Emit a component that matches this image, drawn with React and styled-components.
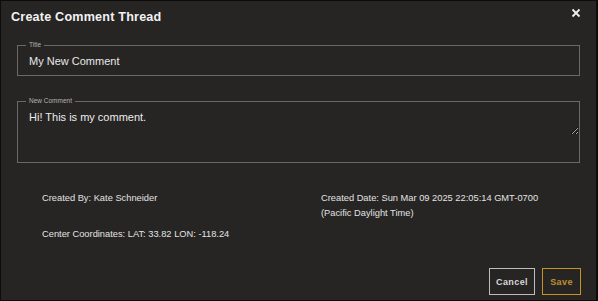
import React from 'react';
import styled, { createGlobalStyle } from 'styled-components';

const GlobalStyle = createGlobalStyle`
  html, body {
    margin: 0;
    padding: 0;
    background: #111;
  }
  * {
    box-sizing: border-box;
  }
`;

const Dialog = styled.div`
  width: 598px;
  height: 301px;
  background-color: #262523;
  border: 1px solid #0c0c0c;
  border-right-width: 2px;
  font-family: "Liberation Sans", Arial, sans-serif;
  color: #e6e6e6;
  display: flex;
  flex-direction: column;
`;

const Header = styled.header`
  display: flex;
  align-items: center;
  justify-content: space-between;
  padding: 2px 15px 0 10px;
  height: 29px;
`;

const Title = styled.h2`
  margin: 0;
  font-size: 12.6px;
  font-weight: 700;
  letter-spacing: 0.2px;
  color: #f2f2f2;
`;

const CloseButton = styled.button`
  background: none;
  border: none;
  padding: 0;
  margin-top: -7px;
  color: #f0f0f0;
  width: 10px;
  height: 10px;
  display: flex;
  align-items: center;
  justify-content: center;
  cursor: pointer;
`;

const Body = styled.div`
  display: flex;
  flex-direction: column;
  gap: 21px;
  padding: 11px 16px 0 16px;
`;

const Field = styled.fieldset`
  margin: 0;
  padding: 0 11px;
  border: 1px solid #6a6968;
  min-width: 0;
  height: ${({ $tall }) => ($tall ? '66px' : '35px')};
  display: flex;
  flex-direction: column;
`;

const Legend = styled.legend`
  font-size: 6.5px;
  color: #b4b3b1;
  padding: 0 3px;
  margin-left: -3px;
  line-height: 8px;
`;

const TextInput = styled.input`
  background: transparent;
  border: none;
  outline: none;
  padding: 0;
  margin-top: 4px;
  color: #e8e8e8;
  font-family: inherit;
  font-size: 11px;
  height: 16px;
`;

const TextArea = styled.textarea`
  background: transparent;
  border: none;
  outline: none;
  padding: 0;
  margin-top: 6px;
  color: #ececec;
  font-family: inherit;
  font-size: 11px;
  font-weight: 400;
  flex: 1;
  margin-right: -11px;
  resize: vertical;
  color-scheme: dark;
`;

const InfoGrid = styled.div`
  display: grid;
  grid-template-columns: 279px 1fr;
  row-gap: 6px;
  padding: 28px 0 0 41px;
  font-size: 9.3px;
  line-height: 15px;
  color: #e3e3e3;
`;

const InfoItem = styled.div`
  grid-column: ${({ $col }) => $col || 'auto'};
`;

const Footer = styled.div`
  display: flex;
  justify-content: flex-end;
  gap: 7px;
  margin-top: auto;
  padding: 0 15px 5px 0;
`;

const Button = styled.button`
  height: 27px;
  width: ${({ $width }) => $width};
  padding: 0;
  background: transparent;
  border: 1px solid ${({ $accent }) => ($accent ? '#c89224' : '#bdbdbd')};
  color: ${({ $accent }) => ($accent ? '#c1912e' : '#d8d8d8')};
  font-family: inherit;
  font-size: 9px;
  font-weight: 700;
  letter-spacing: 0.4px;
  cursor: pointer;
`;

const CloseIcon = () => (
  <svg width="10" height="10" viewBox="0 0 10 10">
    <path d="M1.5 1.5 L8.5 8.5 M8.5 1.5 L1.5 8.5" stroke="currentColor" strokeWidth="1.8" />
  </svg>
);

const App = () => {
  return (
    <>
      <GlobalStyle />
      <Dialog>
        <Header>
          <Title>Create Comment Thread</Title>
          <CloseButton aria-label="close">
            <CloseIcon />
          </CloseButton>
        </Header>
        <Body>
          <Field>
            <Legend>Title</Legend>
            <TextInput defaultValue="My New Comment" />
          </Field>
          <Field $tall>
            <Legend>New Comment</Legend>
            <TextArea defaultValue="Hi! This is my comment." />
          </Field>
        </Body>
        <InfoGrid>
          <InfoItem>Created By: Kate Schneider</InfoItem>
          <InfoItem>
            Created Date: Sun Mar 09 2025 22:05:14 GMT-0700
            <br />
            (Pacific Daylight Time)
          </InfoItem>
          <InfoItem $col="1 / 3">Center Coordinates: LAT: 33.82 LON: -118.24</InfoItem>
        </InfoGrid>
        <Footer>
          <Button $width="46px">Cancel</Button>
          <Button $accent $width="39px">Save</Button>
        </Footer>
      </Dialog>
    </>
  );
};

export default App;
